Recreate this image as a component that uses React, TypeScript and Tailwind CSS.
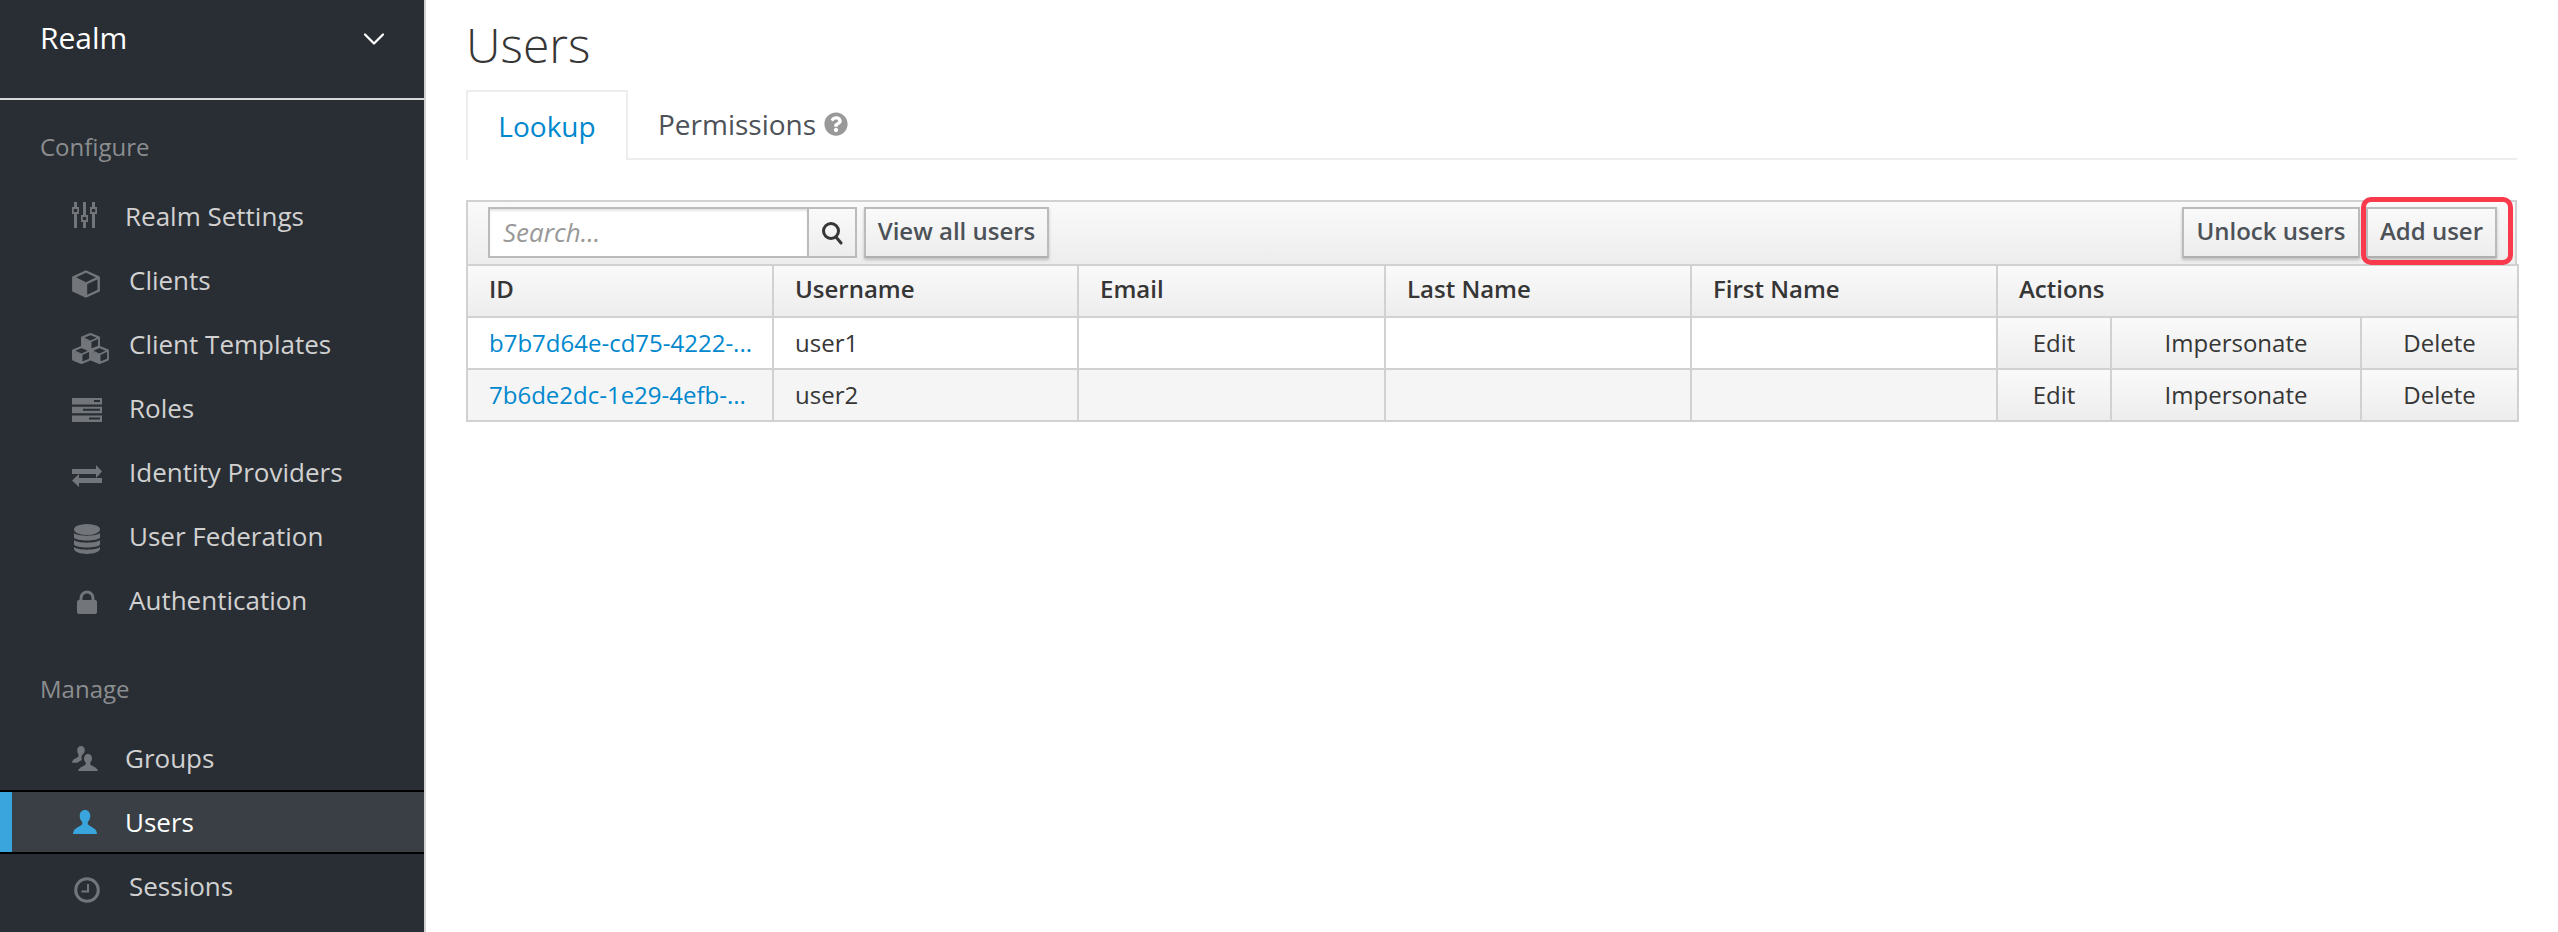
import * as React from "react";
import { ChevronDown } from "lucide-react";
import { FaQuestionCircle } from "react-icons/fa";

const SlidersIcon = () => (
  <svg viewBox="0 0 26 26" className="h-[26px] w-[26px] fill-[#72767b]">
    <path fillRule="evenodd" d="M2 0h3v5h2v7H5v14H2V12H0V5h2zM1.800 7v3h3.400V7zM11 0h3v13h2v7h-2v6h-3v-6H9v-7h2zM10.800 15v3h3.400v-3zM20 0h3v5h2v7h-2v14h-3V12h-2V5h2zM19.800 7v3h3.400V7z" />
  </svg>
);

const CubeIcon = () => (
  <svg viewBox="0 0 28 28" className="h-[28px] w-[28px]">
    <path d="M1 8l13 6v13L1 21z" className="fill-[#72767b]" />
    <path d="M14 1.500l12.700 5.800v13.400L14 26.500 1.300 20.700V7.300zM1.300 7.300L14 13.500l12.700-6.200M14 13.500v13" fill="none" stroke="#72767b" strokeWidth="2.400" strokeLinejoin="round" />
  </svg>
);

const SmallCube = ({ x, y }: { x: number; y: number }) => (
  <g transform={`translate(${x} ${y})`}>
    <path d="M0.500 5l9 4v8l-9-4z" className="fill-[#72767b]" />
    <path d="M9.500 1l8.500 3.500v9L9.500 17 1 13.500v-9zM1 4.500L9.500 8.500 18 4.500M9.500 8.500V17" fill="none" stroke="#72767b" strokeWidth="1.900" strokeLinejoin="round" />
  </g>
);

const CubesIcon = () => (
  <svg viewBox="0 0 37 31" className="h-[31px] w-[37px]">
    <SmallCube x={9} y={0} />
    <SmallCube x={0} y={13} />
    <SmallCube x={18} y={13} />
  </svg>
);

const RolesIcon = () => (
  <svg viewBox="0 0 30 24" className="h-[24px] w-[30px] fill-[#72767b]">
    <path fillRule="evenodd" d="M0 0h30v6.500H0zM22 2v2h6V2zM0 8.700h30v6.500H0zM11 10.700v2h17v-2zM0 17.500h30V24H0zM17 19.500v2h11v-2z" />
  </svg>
);

const ExchangeIcon = () => (
  <svg viewBox="0 0 30 22" className="h-[22px] w-[30px] fill-[#72767b]">
    <path d="M0 4h24V0l6 6.500-6 6.500V9H0zM30 13H7V9l-7 6.500L7 22v-4h23z" />
  </svg>
);

const DatabaseIcon = () => (
  <svg viewBox="0 0 26 30" className="h-[30px] w-[26px] fill-[#72767b]">
    <ellipse cx="13" cy="5.500" rx="13" ry="5.500" />
    <path d="M0 9c3 3.500 23 3.500 26 0v4.500c-2 4-24 4-26 0z" />
    <path d="M0 16c3 3.500 23 3.500 26 0v4.500c-2 4-24 4-26 0z" />
    <path d="M0 23c3 3.500 23 3.500 26 0v2c-2 6.500-24 6.500-26 0z" />
  </svg>
);

const LockIcon = () => (
  <svg viewBox="0 0 20 24" className="h-[24px] w-[20px]">
    <rect x="0" y="10" width="20" height="14" rx="2" className="fill-[#72767b]" />
    <path d="M4 11V8a6 6 0 0 1 12 0v3" fill="none" stroke="#72767b" strokeWidth="3" />
  </svg>
);

const ClockIcon = () => (
  <svg viewBox="0 0 26 26" className="h-[26px] w-[26px]" fill="none" stroke="#72767b">
    <circle cx="13" cy="13" r="11.300" strokeWidth="3" />
    <path d="M14 7v7.500H7.500" strokeWidth="2" />
  </svg>
);

const UserIcon = ({ className }: { className: string }) => (
  <svg viewBox="0 0 24 24" className={className}>
    <path d="M12 0c3.200 0 5.300 2.600 5.300 6 0 2.300-1 4.500-2.500 5.800V14c0 1 4 2.600 7 5 1 .8 2.200 3 2.200 5H0c0-2 1.200-4.200 2.200-5 3-2.400 7-4 7-5v-2.200C7.700 10.500 6.700 8.300 6.700 6 6.700 2.600 8.800 0 12 0z" />
  </svg>
);

const GroupsIcon = () => (
  <svg viewBox="0 0 26 25" className="h-[25px] w-[26px] fill-[#72767b]">
    <path d="M9 0c2.300 0 3.800 1.800 3.800 4.200 0 1.300-.4 2.500-1.100 3.400-1.700 1-2.500 2.900-2.200 5l.5 1.400c-1 .7-3.400 1.600-4.500 2.700H0c.2-1.400 1-2.800 2-3.400 1.500-1 4.500-2.100 4.500-3V8.200C5.700 7.200 5.200 5.700 5.200 4.200 5.200 1.800 6.700 0 9 0z" />
    <path d="M16 8c2.500 0 4 2 4 4.500 0 1.600-.7 3.100-1.700 4v1.700c0 .8 2.700 1.800 4.700 3 1 .6 2.500 2 3 3.800H6c.5-1.800 2-3.200 3-3.800 2-1.200 4.700-2.200 4.700-3v-1.700c-1-.9-1.700-2.400-1.700-4C12 10 13.500 8 16 8z" />
  </svg>
);

const SearchIcon = () => (
  <svg viewBox="0 0 22 24" className="h-[24px] w-[22px]" fill="none" stroke="#363636" strokeWidth="3">
    <circle cx="10" cy="10" r="7.500" />
    <path d="M15 16l5 6" strokeLinecap="round" />
  </svg>
);

type NavItem = {
  label: string;
  icon: React.ReactNode;
  gap: string;
  active?: boolean;
};

const configureItems: NavItem[] = [
  { label: "Realm Settings", icon: <span className="-mt-[2px] block"><SlidersIcon /></span>, gap: "w-[53px]" },
  { label: "Clients", icon: <span className="mt-[8px] block"><CubeIcon /></span>, gap: "w-[57px]" },
  { label: "Client Templates", icon: <span className="mt-[8px] block"><CubesIcon /></span>, gap: "w-[57px]" },
  { label: "Roles", icon: <span className="mt-[4px] block"><RolesIcon /></span>, gap: "w-[57px]" },
  { label: "Identity Providers", icon: <span className="mt-[8px] block"><ExchangeIcon /></span>, gap: "w-[57px]" },
  { label: "User Federation", icon: <span className="ml-[2px] mt-[6px] block"><DatabaseIcon /></span>, gap: "w-[57px]" },
  { label: "Authentication", icon: <span className="ml-[5px] mt-[4px] block"><LockIcon /></span>, gap: "w-[57px]" },
];

const manageItems: NavItem[] = [
  { label: "Groups", icon: <GroupsIcon />, gap: "w-[53px]" },
  { label: "Users", icon: <UserIcon className="ml-[1px] h-[24px] w-[24px] fill-[#39a5dc]" />, gap: "w-[53px]", active: true },
  { label: "Sessions", icon: <span className="ml-[2px] mt-[7px] block"><ClockIcon /></span>, gap: "w-[57px]" },
];

const NavRow = ({ item }: { item: NavItem }) => (
  <div
    className={
      item.active
        ? "flex h-[64px] items-center border-y-2 border-black bg-[#393f44] text-white"
        : "flex h-[64px] items-center text-[#d1d1d1]"
    }
  >
    {item.active ? (
      <span className="h-[60px] w-[12px] shrink-0 bg-[#39a5dc]" />
    ) : (
      <span className="w-[12px] shrink-0" />
    )}
    <span className="ml-[60px] flex h-[32px] w-0 items-center">
      <span className="shrink-0">{item.icon}</span>
    </span>
    <span className={`${item.gap} shrink-0`} />
    <span className="whitespace-nowrap text-[26px] leading-[32px]">{item.label}</span>
  </div>
);

const btn =
  "flex h-[51px] items-center justify-center border-2 border-[#bbbbbb] border-b-[#b0b0b0] bg-gradient-to-b from-[#fafafa] to-[#ededed] pb-[3px] text-[24px] font-semibold text-[#4d5258] shadow-[0_2px_3px_rgba(0,0,0,0.2)]";

const headCell =
  "border-2 border-[#d1d1d1] bg-gradient-to-b from-[#fafafa] to-[#ededed] px-[21px] pb-[5px] text-left text-[24px] font-semibold text-[#363636]";
const bodyCell = "border-2 border-[#d1d1d1] px-[21px] text-[24px] whitespace-nowrap text-[#363636]";
const linkCell = "border-2 border-[#d1d1d1] px-[21px] text-[24px] whitespace-nowrap text-[#0088ce]";
const actionCell =
  "border-2 border-[#d1d1d1] bg-gradient-to-b from-[#fafafa] to-[#ededed] text-center text-[24px] text-[#363636]";

const rows = [
  { id: "b7b7d64e-cd75-4222-...", username: "user1", striped: false },
  { id: "7b6de2dc-1e29-4efb-...", username: "user2", striped: true },
];

export default function App() {
  return (
    <div className="flex h-[932px] overflow-hidden bg-white font-['Open_Sans',sans-serif]">
      <aside className="w-[426px] shrink-0 border-r-2 border-[#d1d1d1] bg-[#292e34]">
        <div className="flex h-[100px] items-start justify-between border-b-2 border-[#d9d9d9] pl-[40px] pr-[32px] pt-[15px]">
          <span className="text-[30px] leading-[46px] text-white">Realm</span>
          <ChevronDown className="mt-[6px] h-[36px] w-[36px] text-white" strokeWidth={1.5} />
        </div>
        <div className="box-content h-[32px] pl-[40px] pt-[31px] text-[24px] leading-[32px] text-[#8b8d8f]">Configure</div>
        <nav className="mt-[21px]">
          {configureItems.map((item) => (
            <NavRow key={item.label} item={item} />
          ))}
        </nav>
        <div className="mt-[41px] h-[32px] pl-[40px] text-[24px] leading-[32px] text-[#8b8d8f]">Manage</div>
        <nav className="mt-[21px]">
          {manageItems.map((item) => (
            <NavRow key={item.label} item={item} />
          ))}
        </nav>
      </aside>

      <main className="w-[2091px] shrink-0 pl-[40px]">
        <h1 className="pt-[15px] text-[48px] font-light leading-[60px] text-[#363636]">Users</h1>

        <div className="mt-[15px] flex h-[70px] items-end border-b-2 border-[#ededed]">
          <div className="-mb-[2px] flex h-[70px] w-[162px] items-center justify-center border-2 border-b-0 border-[#ededed] bg-white pb-[1px] text-[28px] text-[#0088ce]">
            Lookup
          </div>
          <div className="ml-[30px] flex h-[68px] items-center gap-[8px] text-[28px] text-[#4d5258]">
            Permissions
            <FaQuestionCircle className="h-[24px] w-[24px] text-[#999999]" />
          </div>
        </div>

        <div className="mt-[40px] flex h-[64px] items-center justify-between border-2 border-b-0 border-[#d1d1d1] bg-gradient-to-b from-[#fafafa] to-[#ededed] pb-[1px] pl-[20px] pr-[18px]">
          <div className="flex items-center gap-[7px]">
            <div className="flex h-[51px] w-[369px] border-2 border-[#bbbbbb]">
              <input
                readOnly
                placeholder="Search..."
                className="h-full w-[317px] bg-white pb-[2px] pl-[13px] text-[26px] italic outline-none shadow-[inset_0_2px_2px_rgba(0,0,0,0.1)] placeholder:text-[#999999]"
              />
              <span className="flex flex-1 items-center justify-center border-l-2 border-[#bbbbbb] bg-gradient-to-b from-[#fafafa] to-[#ededed]">
                <SearchIcon />
              </span>
            </div>
            <button className={`${btn} w-[185px]`}>View all users</button>
          </div>
          <div className="flex items-center">
            <button className={`${btn} w-[178px]`}>Unlock users</button>
            <span className="relative ml-[6px]">
              <button className={`${btn} w-[131px]`}>Add user</button>
              <span className="absolute -bottom-[7px] -left-[5px] -right-[16px] -top-[10px] rounded-[10px] border-[5px] border-[#f93a4d]" />
            </span>
          </div>
        </div>

        <table className="w-[2051px] table-fixed border-collapse">
          <colgroup>
            <col className="w-[306px]" />
            <col className="w-[305px]" />
            <col className="w-[307px]" />
            <col className="w-[306px]" />
            <col className="w-[306px]" />
            <col className="w-[114px]" />
            <col className="w-[250px]" />
            <col className="w-[157px]" />
          </colgroup>
          <thead>
            <tr className="h-[52px]">
              <th className={headCell}>ID</th>
              <th className={headCell}>Username</th>
              <th className={headCell}>Email</th>
              <th className={headCell}>Last Name</th>
              <th className={headCell}>First Name</th>
              <th colSpan={3} className={headCell}>Actions</th>
            </tr>
          </thead>
          <tbody>
            {rows.map((row) => (
              <tr key={row.username} className={row.striped ? "h-[52px] bg-[#f5f5f5]" : "h-[52px] bg-white"}>
                <td className={linkCell}>{row.id}</td>
                <td className={bodyCell}>{row.username}</td>
                <td className={bodyCell} />
                <td className={bodyCell} />
                <td className={bodyCell} />
                <td className={actionCell}>Edit</td>
                <td className={actionCell}>Impersonate</td>
                <td className={actionCell}>Delete</td>
              </tr>
            ))}
          </tbody>
        </table>
      </main>
    </div>
  );
}
